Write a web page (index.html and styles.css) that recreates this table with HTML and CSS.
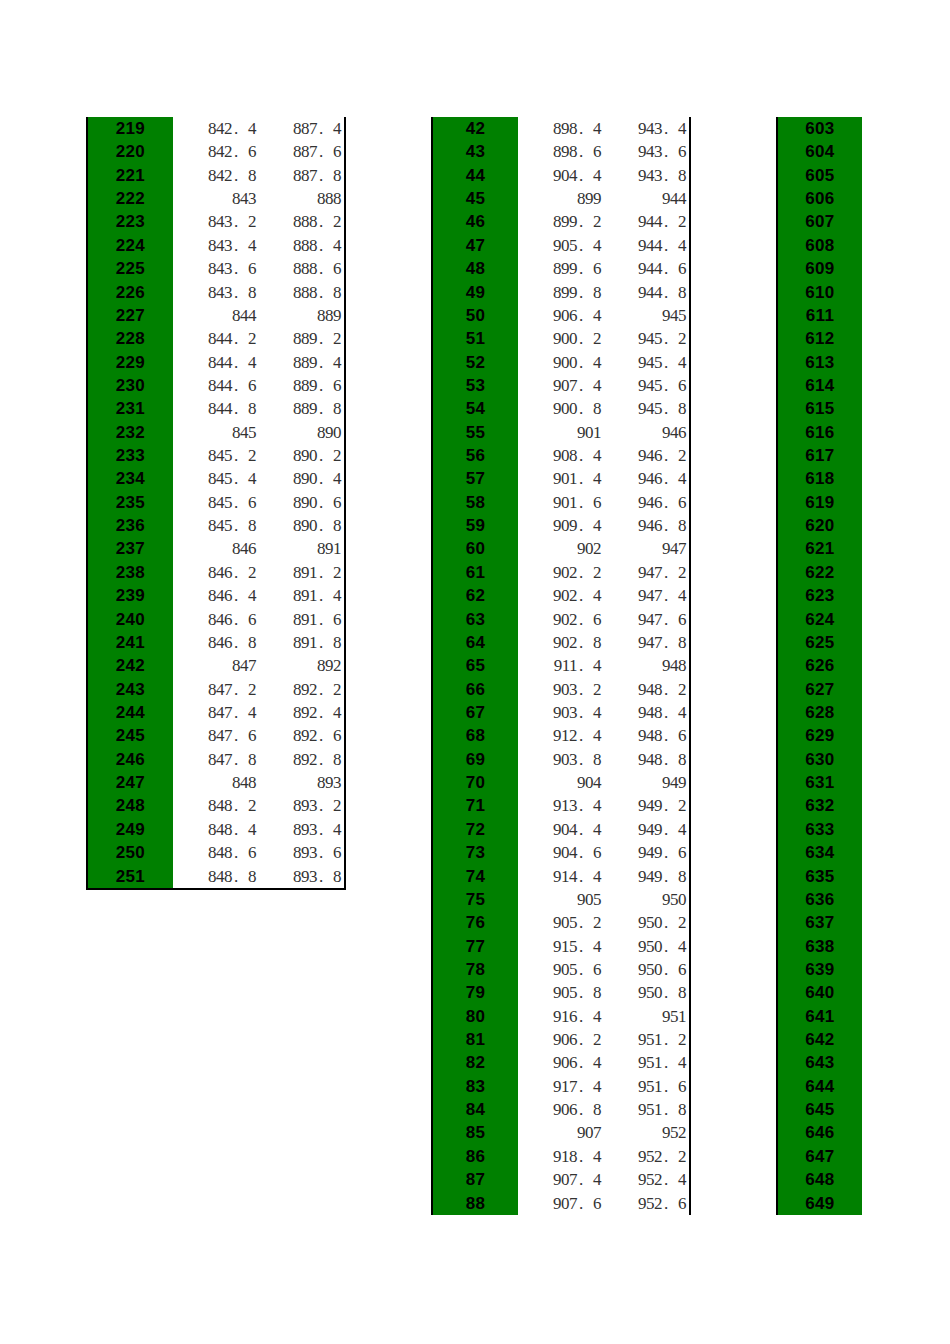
FILE: index.html
```html
<!DOCTYPE html>
<html lang="zh">
<head>
<meta charset="utf-8">
<title>Table</title>
<link rel="stylesheet" href="styles.css">
</head>
<body>
<div class="page">
  <div class="sheet sheet-a">
    <span class="id">219</span><span class="v">842<span class="dp">.</span>4</span><span class="v">887<span class="dp">.</span>4</span>
    <span class="id">220</span><span class="v">842<span class="dp">.</span>6</span><span class="v">887<span class="dp">.</span>6</span>
    <span class="id">221</span><span class="v">842<span class="dp">.</span>8</span><span class="v">887<span class="dp">.</span>8</span>
    <span class="id">222</span><span class="v">843</span><span class="v">888</span>
    <span class="id">223</span><span class="v">843<span class="dp">.</span>2</span><span class="v">888<span class="dp">.</span>2</span>
    <span class="id">224</span><span class="v">843<span class="dp">.</span>4</span><span class="v">888<span class="dp">.</span>4</span>
    <span class="id">225</span><span class="v">843<span class="dp">.</span>6</span><span class="v">888<span class="dp">.</span>6</span>
    <span class="id">226</span><span class="v">843<span class="dp">.</span>8</span><span class="v">888<span class="dp">.</span>8</span>
    <span class="id">227</span><span class="v">844</span><span class="v">889</span>
    <span class="id">228</span><span class="v">844<span class="dp">.</span>2</span><span class="v">889<span class="dp">.</span>2</span>
    <span class="id">229</span><span class="v">844<span class="dp">.</span>4</span><span class="v">889<span class="dp">.</span>4</span>
    <span class="id">230</span><span class="v">844<span class="dp">.</span>6</span><span class="v">889<span class="dp">.</span>6</span>
    <span class="id">231</span><span class="v">844<span class="dp">.</span>8</span><span class="v">889<span class="dp">.</span>8</span>
    <span class="id">232</span><span class="v">845</span><span class="v">890</span>
    <span class="id">233</span><span class="v">845<span class="dp">.</span>2</span><span class="v">890<span class="dp">.</span>2</span>
    <span class="id">234</span><span class="v">845<span class="dp">.</span>4</span><span class="v">890<span class="dp">.</span>4</span>
    <span class="id">235</span><span class="v">845<span class="dp">.</span>6</span><span class="v">890<span class="dp">.</span>6</span>
    <span class="id">236</span><span class="v">845<span class="dp">.</span>8</span><span class="v">890<span class="dp">.</span>8</span>
    <span class="id">237</span><span class="v">846</span><span class="v">891</span>
    <span class="id">238</span><span class="v">846<span class="dp">.</span>2</span><span class="v">891<span class="dp">.</span>2</span>
    <span class="id">239</span><span class="v">846<span class="dp">.</span>4</span><span class="v">891<span class="dp">.</span>4</span>
    <span class="id">240</span><span class="v">846<span class="dp">.</span>6</span><span class="v">891<span class="dp">.</span>6</span>
    <span class="id">241</span><span class="v">846<span class="dp">.</span>8</span><span class="v">891<span class="dp">.</span>8</span>
    <span class="id">242</span><span class="v">847</span><span class="v">892</span>
    <span class="id">243</span><span class="v">847<span class="dp">.</span>2</span><span class="v">892<span class="dp">.</span>2</span>
    <span class="id">244</span><span class="v">847<span class="dp">.</span>4</span><span class="v">892<span class="dp">.</span>4</span>
    <span class="id">245</span><span class="v">847<span class="dp">.</span>6</span><span class="v">892<span class="dp">.</span>6</span>
    <span class="id">246</span><span class="v">847<span class="dp">.</span>8</span><span class="v">892<span class="dp">.</span>8</span>
    <span class="id">247</span><span class="v">848</span><span class="v">893</span>
    <span class="id">248</span><span class="v">848<span class="dp">.</span>2</span><span class="v">893<span class="dp">.</span>2</span>
    <span class="id">249</span><span class="v">848<span class="dp">.</span>4</span><span class="v">893<span class="dp">.</span>4</span>
    <span class="id">250</span><span class="v">848<span class="dp">.</span>6</span><span class="v">893<span class="dp">.</span>6</span>
    <span class="id">251</span><span class="v">848<span class="dp">.</span>8</span><span class="v">893<span class="dp">.</span>8</span>
  </div>

  <div class="sheet sheet-b">
    <span class="id">42</span><span class="v">898<span class="dp">.</span>4</span><span class="v">943<span class="dp">.</span>4</span>
    <span class="id">43</span><span class="v">898<span class="dp">.</span>6</span><span class="v">943<span class="dp">.</span>6</span>
    <span class="id">44</span><span class="v">904<span class="dp">.</span>4</span><span class="v">943<span class="dp">.</span>8</span>
    <span class="id">45</span><span class="v">899</span><span class="v">944</span>
    <span class="id">46</span><span class="v">899<span class="dp">.</span>2</span><span class="v">944<span class="dp">.</span>2</span>
    <span class="id">47</span><span class="v">905<span class="dp">.</span>4</span><span class="v">944<span class="dp">.</span>4</span>
    <span class="id">48</span><span class="v">899<span class="dp">.</span>6</span><span class="v">944<span class="dp">.</span>6</span>
    <span class="id">49</span><span class="v">899<span class="dp">.</span>8</span><span class="v">944<span class="dp">.</span>8</span>
    <span class="id">50</span><span class="v">906<span class="dp">.</span>4</span><span class="v">945</span>
    <span class="id">51</span><span class="v">900<span class="dp">.</span>2</span><span class="v">945<span class="dp">.</span>2</span>
    <span class="id">52</span><span class="v">900<span class="dp">.</span>4</span><span class="v">945<span class="dp">.</span>4</span>
    <span class="id">53</span><span class="v">907<span class="dp">.</span>4</span><span class="v">945<span class="dp">.</span>6</span>
    <span class="id">54</span><span class="v">900<span class="dp">.</span>8</span><span class="v">945<span class="dp">.</span>8</span>
    <span class="id">55</span><span class="v">901</span><span class="v">946</span>
    <span class="id">56</span><span class="v">908<span class="dp">.</span>4</span><span class="v">946<span class="dp">.</span>2</span>
    <span class="id">57</span><span class="v">901<span class="dp">.</span>4</span><span class="v">946<span class="dp">.</span>4</span>
    <span class="id">58</span><span class="v">901<span class="dp">.</span>6</span><span class="v">946<span class="dp">.</span>6</span>
    <span class="id">59</span><span class="v">909<span class="dp">.</span>4</span><span class="v">946<span class="dp">.</span>8</span>
    <span class="id">60</span><span class="v">902</span><span class="v">947</span>
    <span class="id">61</span><span class="v">902<span class="dp">.</span>2</span><span class="v">947<span class="dp">.</span>2</span>
    <span class="id">62</span><span class="v">902<span class="dp">.</span>4</span><span class="v">947<span class="dp">.</span>4</span>
    <span class="id">63</span><span class="v">902<span class="dp">.</span>6</span><span class="v">947<span class="dp">.</span>6</span>
    <span class="id">64</span><span class="v">902<span class="dp">.</span>8</span><span class="v">947<span class="dp">.</span>8</span>
    <span class="id">65</span><span class="v">911<span class="dp">.</span>4</span><span class="v">948</span>
    <span class="id">66</span><span class="v">903<span class="dp">.</span>2</span><span class="v">948<span class="dp">.</span>2</span>
    <span class="id">67</span><span class="v">903<span class="dp">.</span>4</span><span class="v">948<span class="dp">.</span>4</span>
    <span class="id">68</span><span class="v">912<span class="dp">.</span>4</span><span class="v">948<span class="dp">.</span>6</span>
    <span class="id">69</span><span class="v">903<span class="dp">.</span>8</span><span class="v">948<span class="dp">.</span>8</span>
    <span class="id">70</span><span class="v">904</span><span class="v">949</span>
    <span class="id">71</span><span class="v">913<span class="dp">.</span>4</span><span class="v">949<span class="dp">.</span>2</span>
    <span class="id">72</span><span class="v">904<span class="dp">.</span>4</span><span class="v">949<span class="dp">.</span>4</span>
    <span class="id">73</span><span class="v">904<span class="dp">.</span>6</span><span class="v">949<span class="dp">.</span>6</span>
    <span class="id">74</span><span class="v">914<span class="dp">.</span>4</span><span class="v">949<span class="dp">.</span>8</span>
    <span class="id">75</span><span class="v">905</span><span class="v">950</span>
    <span class="id">76</span><span class="v">905<span class="dp">.</span>2</span><span class="v">950<span class="dp">.</span>2</span>
    <span class="id">77</span><span class="v">915<span class="dp">.</span>4</span><span class="v">950<span class="dp">.</span>4</span>
    <span class="id">78</span><span class="v">905<span class="dp">.</span>6</span><span class="v">950<span class="dp">.</span>6</span>
    <span class="id">79</span><span class="v">905<span class="dp">.</span>8</span><span class="v">950<span class="dp">.</span>8</span>
    <span class="id">80</span><span class="v">916<span class="dp">.</span>4</span><span class="v">951</span>
    <span class="id">81</span><span class="v">906<span class="dp">.</span>2</span><span class="v">951<span class="dp">.</span>2</span>
    <span class="id">82</span><span class="v">906<span class="dp">.</span>4</span><span class="v">951<span class="dp">.</span>4</span>
    <span class="id">83</span><span class="v">917<span class="dp">.</span>4</span><span class="v">951<span class="dp">.</span>6</span>
    <span class="id">84</span><span class="v">906<span class="dp">.</span>8</span><span class="v">951<span class="dp">.</span>8</span>
    <span class="id">85</span><span class="v">907</span><span class="v">952</span>
    <span class="id">86</span><span class="v">918<span class="dp">.</span>4</span><span class="v">952<span class="dp">.</span>2</span>
    <span class="id">87</span><span class="v">907<span class="dp">.</span>4</span><span class="v">952<span class="dp">.</span>4</span>
    <span class="id">88</span><span class="v">907<span class="dp">.</span>6</span><span class="v">952<span class="dp">.</span>6</span>
  </div>

  <div class="sheet sheet-c">
    <span class="id">603</span><span class="id">604</span><span class="id">605</span><span class="id">606</span><span class="id">607</span><span class="id">608</span><span class="id">609</span><span class="id">610</span><span class="id">611</span><span class="id">612</span><span class="id">613</span><span class="id">614</span><span class="id">615</span><span class="id">616</span><span class="id">617</span><span class="id">618</span><span class="id">619</span><span class="id">620</span><span class="id">621</span><span class="id">622</span><span class="id">623</span><span class="id">624</span><span class="id">625</span><span class="id">626</span><span class="id">627</span><span class="id">628</span><span class="id">629</span><span class="id">630</span><span class="id">631</span><span class="id">632</span><span class="id">633</span><span class="id">634</span><span class="id">635</span><span class="id">636</span><span class="id">637</span><span class="id">638</span><span class="id">639</span><span class="id">640</span><span class="id">641</span><span class="id">642</span><span class="id">643</span><span class="id">644</span><span class="id">645</span><span class="id">646</span><span class="id">647</span><span class="id">648</span><span class="id">649</span>
  </div>
</div>
</body>
</html>
```

FILE: styles.css
```css
html, body {
  margin: 0;
  padding: 0;
  background: #ffffff;
}

.page {
  display: flex;
  align-items: flex-start;
  padding: 117px 0 0 86px;
  gap: 85px;
}

.sheet {
  display: grid;
  grid-template-columns: 85px 86px 85px;
  grid-auto-rows: 23.36px;
  border-left: 2px solid #000;
}

.sheet-a {
  border-right: 2px solid #000;
  border-bottom: 2px solid #000;
}

.sheet-b {
  border-right: 2px solid #000;
}

.sheet-c {
  grid-template-columns: 84px;
}

.id {
  background: #008000;
  color: #000;
  font-family: "Liberation Sans", Arial, sans-serif;
  font-weight: bold;
  font-size: 17px;
  letter-spacing: 0.3px;
  text-align: center;
  line-height: 23.36px;
}

.v {
  color: #333333;
  font-family: "Liberation Serif", "Times New Roman", serif;
  font-size: 17px;
  letter-spacing: -0.5px;
  text-align: right;
  padding-right: 3px;
  line-height: 23.36px;
  white-space: nowrap;
}

.dp {
  display: inline-block;
  width: 16px;
  padding-left: 2px;
  box-sizing: border-box;
  text-align: left;
}
```
